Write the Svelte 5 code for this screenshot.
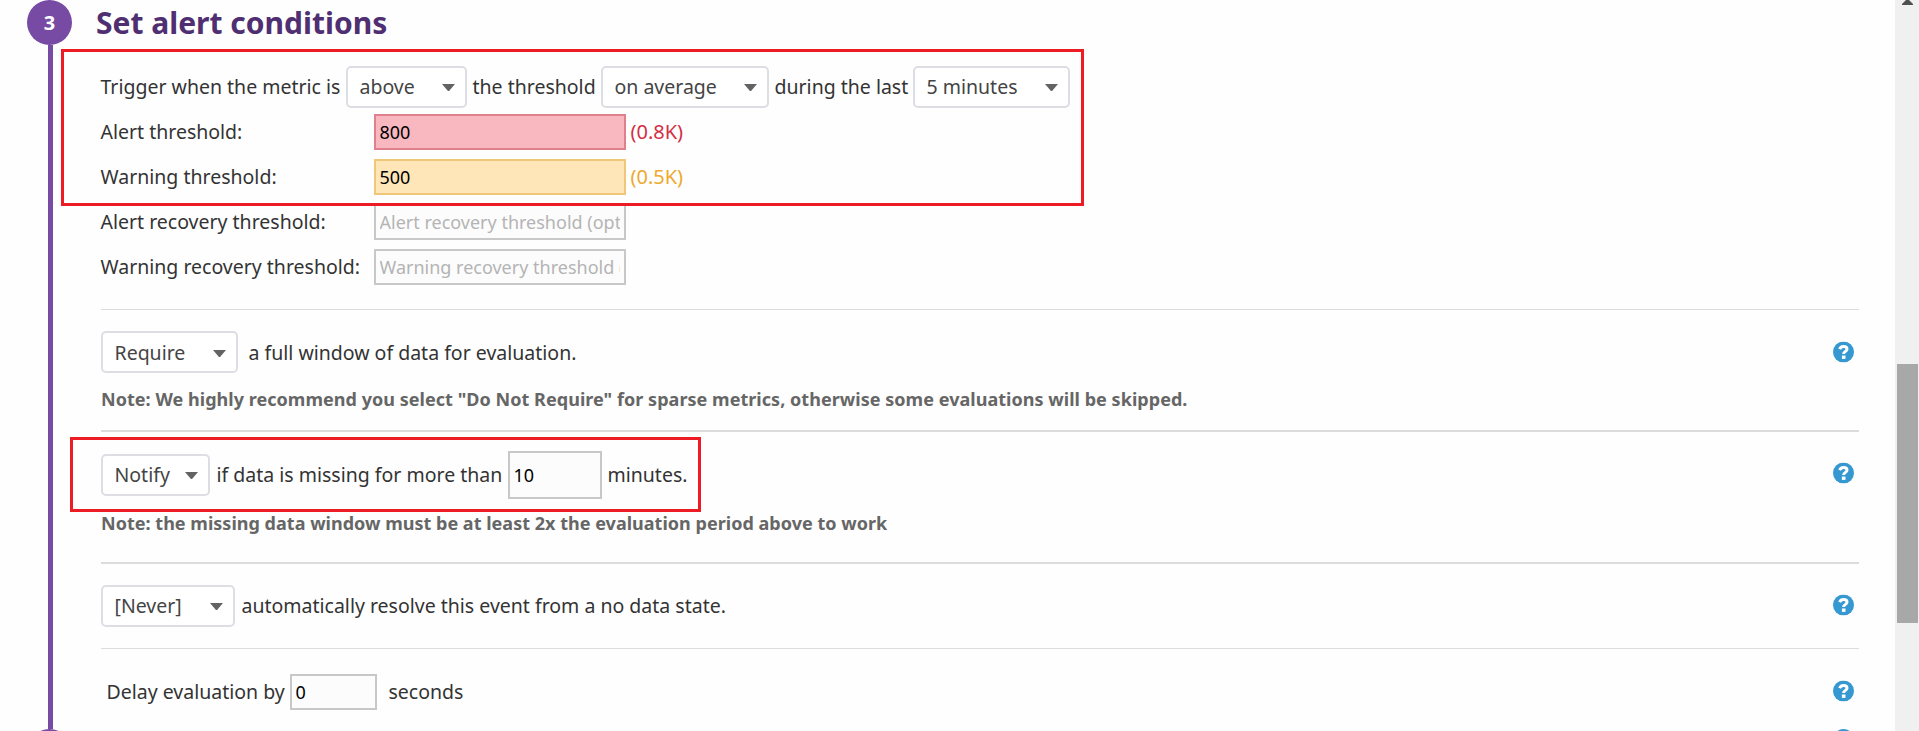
<script>
  let aggregation = $state('on average');
  let alertThreshold = $state('800');
  let warningThreshold = $state('500');
  let missingWindow = $state('10');
  let delay = $state('0');
</script>

{#snippet select(label, size)}
  <button class="select {size}" type="button">
    <span>{label}</span>
    <svg width="13" height="7" viewBox="0 0 13 7"><path d="M0 0H13L7.5 6.4Q6.5 7.4 5.5 6.4Z" fill="#636365" /></svg>
  </button>
{/snippet}

{#snippet help()}
  <svg class="help" width="21" height="21" viewBox="0 0 21 21">
    <circle cx="10.5" cy="10.5" r="10.5" fill="#3598d0" />
    <path d="M6.6 7.6C7.4 5.8 8.8 5.1 10.6 5.1C12.6 5.1 14 6.2 14 7.8C14 10 10.6 9.8 10.6 12.6" fill="none" stroke="#fff" stroke-width="3" />
    <rect x="8.9" y="14" width="3.6" height="3.4" fill="#fff" />
  </svg>
{/snippet}

<div class="page">
  <aside class="rail">
    <div class="step">3</div>
    <div class="line"></div>
    <div class="step next"></div>
  </aside>

  <main>
    <h2>Set alert conditions</h2>

    <section class="thresholds">
      <div class="row trigger">
        <span class="t-trigger">Trigger when the metric is</span>
        {@render select('above', 'w121')}
        <span class="t-the">the threshold</span>
        {@render select(aggregation, 'w168')}
        <span class="t-during">during the last</span>
        {@render select('5 minutes', 'w157')}
      </div>
      <div class="row field">
        <label for="alert">Alert threshold:</label>
        <input id="alert" class="alert" bind:value={alertThreshold} />
        <span class="hint red">(0.8K)</span>
      </div>
      <div class="row field">
        <label for="warning">Warning threshold:</label>
        <input id="warning" class="warning" bind:value={warningThreshold} />
        <span class="hint amber">(0.5K)</span>
      </div>
      <div class="row field">
        <label for="alert-rec">Alert recovery threshold:</label>
        <input id="alert-rec" placeholder="Alert recovery threshold (optional)" />
      </div>
      <div class="row field">
        <label for="warn-rec">Warning recovery threshold:</label>
        <input id="warn-rec" placeholder="Warning recovery threshold (optional)" />
      </div>
      <div class="outline first"></div>
    </section>

    <section class="require">
      <div class="row">
        {@render select('Require', 'w137')}
        <span class="t-full">a full window of data for evaluation.</span>
        {@render help()}
      </div>
      <p class="n1">Note: We highly recommend you select "Do Not Require" for sparse metrics, otherwise some evaluations will be skipped.</p>
    </section>

    <section class="notify">
      <div class="row">
        {@render select('Notify', 'w109')}
        <span class="t-if">if data is missing for more than</span>
        <input class="missing" bind:value={missingWindow} />
        <span class="t-min">minutes.</span>
        {@render help()}
      </div>
      <p class="n2">Note: the missing data window must be at least 2x the evaluation period above to work</p>
      <div class="outline second"></div>
    </section>

    <section class="resolve">
      <div class="row">
        {@render select('[Never]', 'w134')}
        <span class="t-auto">automatically resolve this event from a no data state.</span>
        {@render help()}
      </div>
    </section>

    <section class="delay">
      <div class="row">
        <span class="t-delay">Delay evaluation by</span>
        <input class="seconds" bind:value={delay} />
        <span class="t-sec">seconds</span>
        {@render help()}
      </div>
      <div class="row following">{@render help()}</div>
    </section>
  </main>

  <div class="scrollbar">
    <svg width="11" height="5" viewBox="0 0 11 5"><path d="M4 0H7L11 4V5H0V4Z" fill="#505050" /></svg>
    <div class="thumb"></div>
  </div>
</div>

<style>
  :global(body) { margin: 0; overflow: hidden; background: #fff; }
  .page {
    display: flex;
    width: 1919px;
    height: 731px;
    overflow: hidden;
    background: #fefefe;
    font: 19.5px/28px "Noto Sans", sans-serif;
    color: #333;
    white-space: nowrap;
  }
  .page * { box-sizing: border-box; }
  .rail {
    display: flex;
    flex-direction: column;
    align-items: center;
    width: 45px;
    margin-left: 27px;
    flex: none;
  }
  .step {
    flex: none;
    width: 45px;
    height: 45px;
    border-radius: 50%;
    background: #774aa4;
    color: #fff;
    font-size: 20px;
    font-weight: 700;
    line-height: 45px;
    text-align: center;
  }
  .line { width: 5px; height: 684px; flex: none; margin-left: 2px; background: #774aa4; }
  main { flex: none; width: 1758px; margin-left: 29px; }
  h2 {
    height: 49px;
    margin: 0 0 0 -5px;
    font-size: 30px;
    line-height: 45px;
    font-weight: 700;
    color: #4f2f71;
  }
  section { position: relative; border-bottom: 1px solid #dcdcdc; }
  .row { display: flex; align-items: center; }
  .row > * { flex: none; }
  .row span, .row label { text-indent: -0.5px; }
  .thresholds { height: 261px; padding-top: 17px; }
  .trigger { height: 42px; margin-bottom: 1px; }
  .field { height: 45px; }
  .field label { width: 273px; }
  .t-trigger { width: 245px; }
  .t-the { width: 134px; padding-left: 6px; }
  .t-during { width: 144px; padding-left: 6px; }
  .select {
    display: flex;
    align-items: center;
    justify-content: space-between;
    height: 42px;
    margin: 0;
    padding: 0 10px 0 12px;
    border: 2px solid #dddde4;
    border-radius: 5px;
    background: #fff;
    color: #444;
    font: inherit;
  }
  .w121 { width: 121px; }
  .w168 { width: 168px; }
  .w157 { width: 157px; }
  .w137 { width: 137px; }
  .w109 { width: 109px; }
  .w134 { width: 134px; }
  input {
    width: 252px;
    height: 36px;
    margin: 0;
    padding: 0 4px;
    border: 2px solid #c8c8c8;
    border-radius: 0;
    outline: 0;
    background: #fcfcfc;
    color: #000;
    font: 18px "Noto Sans", sans-serif;
    text-indent: -0.5px;
  }
  input::placeholder { color: #b4b4b4; opacity: 1; }
  .alert { border-color: #e0808c; background: #f9b8c0; }
  .warning { border-color: #efc778; background: #ffe6b8; }
  .hint { padding-left: 5px; font-size: 20px; }
  .red { color: #d33043; }
  .amber { color: #efa92f; }
  .outline { position: absolute; border: 3px solid #ed1c24; pointer-events: none; }
  .first { left: -40px; top: 0; width: 1023px; height: 157px; }
  .second { left: -31px; top: 5px; width: 631px; height: 75px; }
  p {
    margin: 0;
    font-size: 18px;
    font-weight: 700;
    line-height: 26px;
    color: #666;
  }
  .row .help { margin-left: auto; margin-right: 5px; }
  .require { height: 122px; padding-top: 21px; border-bottom-width: 2px; }
  .require .select { padding-top: 2px; }
  .require .help { transform: translateY(-0.5px); }
  .t-full { padding: 2px 0 0 11px; }
  .n1 { margin-top: 13px; letter-spacing: 0.038px; }
  .notify { height: 132px; padding-top: 19px; border-bottom-width: 2px; }
  .notify .row { height: 48px; }
  .notify .help { transform: translateY(-2.5px); }
  .t-if { width: 298px; padding-left: 7px; }
  .missing { width: 94px; height: 48px; }
  .t-min { padding-left: 6px; }
  .n2 { margin-top: 11px; letter-spacing: 0.02px; }
  .resolve { height: 85px; padding-top: 21px; }
  .resolve .help { transform: translateY(-1.5px); }
  .t-auto { padding-left: 7px; }
  .delay { padding-top: 25px; border: 0; }
  .delay .help { transform: translateY(-1.5px); }
  .t-delay { width: 189px; padding-left: 6px; }
  .seconds { width: 87px; }
  .t-sec { padding-left: 12px; }
  .following { margin-top: 20px; }
  .delay .following .help { transform: translateY(-1px); }
  .scrollbar {
    flex: none;
    display: flex;
    flex-direction: column;
    align-items: flex-start;
    width: 24px;
    margin-left: 36px;
    background: #f0f0f0;
  }
  .scrollbar svg { margin-left: 7px; }
  .thumb { width: 21px; height: 259px; margin: 359px 0 0 2px; background: #a8a8a8; }
</style>
